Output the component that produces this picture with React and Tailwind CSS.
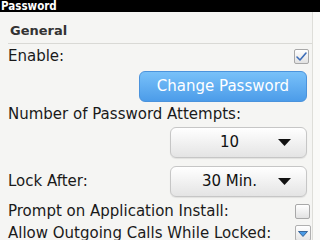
import React from "react";

const font = { fontFamily: '"DejaVu Sans", "Liberation Sans", sans-serif' };

function Dropdown({ label }) {
  return (
    <div className="w-[137px] h-[31px] rounded-[6px] border border-[#c6c6c6] bg-gradient-to-b from-[#ffffff] to-[#e4e4e4] shadow-[0_1px_1px_rgba(0,0,0,0.08)] flex items-center">
      <div className="flex-1 text-center pl-[10px] text-[15px] leading-[15px] text-[#111]">{label}</div>
      <svg width="13" height="7" viewBox="0 0 13 7" className="mr-[15px]">
        <polygon points="0,0 13,0 6.5,7" fill="#111" />
      </svg>
    </div>
  );
}

function Checkbox({ checked }) {
  return (
    <div className="w-[15px] h-[15px] rounded-[2px] border border-[#a8a8a8] bg-gradient-to-b from-[#ffffff] to-[#e2e2e2] flex items-center justify-center">
      {checked && (
        <svg width="13" height="13" viewBox="0 0 13 13">
          <path d="M2 7 L5 10 L11 3" stroke="#3d6db8" strokeWidth="1.6" fill="none" strokeLinecap="round" strokeLinejoin="round" />
        </svg>
      )}
    </div>
  );
}

export default function App() {
  return (
    <div className="w-[320px] h-[240px] overflow-hidden flex flex-col bg-[#f5f5f3]" style={font}>
      <div className="h-[12px] bg-black text-white font-bold text-[11.5px] leading-[12px] pl-[1px]" style={{ fontFamily: '"DejaVu Sans Condensed", "DejaVu Sans", sans-serif' }}>
        Password
      </div>
      <div className="h-px bg-[#2a2a2a]" />
      <div className="flex-1 flex">
        <div className="flex-1 flex flex-col border-r border-[#deded9]">
          <div className="h-[31px] pt-[11px] pl-[10px] text-[13px] leading-[15px] font-bold text-[#333]">General</div>
          <div className="h-px bg-[#d9d9d5] ml-[8px]" />
          <div className="h-[25px] flex items-center justify-between pl-[8px] pr-[3px]">
            <span className="text-[15px] leading-[15px] text-[#1a1a1a]">Enable:</span>
            <Checkbox checked />
          </div>
          <div className="mt-[2px] h-[31px] flex justify-end pr-[5px]">
            <div className="w-[168px] h-[31px] rounded-[6px] border border-[#4b93dc] bg-gradient-to-b from-[#78c1f9] to-[#4c9ce9] flex items-center justify-center text-white text-[15px] leading-[15px]">
              Change Password
            </div>
          </div>
          <div className="h-[25px] flex items-center pl-[8px]">
            <span className="text-[15px] leading-[15px] text-[#1a1a1a]">Number of Password Attempts:</span>
          </div>
          <div className="h-[31px] flex justify-end pr-[5px]">
            <Dropdown label="10" />
          </div>
          <div className="mt-[8px] h-[30px] flex items-center justify-between pl-[8px] pr-[5px]">
            <span className="text-[15px] leading-[15px] text-[#1a1a1a]">Lock After:</span>
            <Dropdown label="30 Min." />
          </div>
          <div className="h-[30px] flex items-center justify-between pl-[8px] pr-[2px]">
            <span className="text-[15px] leading-[15px] text-[#1a1a1a]">Prompt on Application Install:</span>
            <Checkbox />
          </div>
          <div className="h-[15px] flex items-start justify-between pl-[8px] pr-[1px]">
            <span className="text-[15px] leading-[15px] text-[#1a1a1a]">Allow Outgoing Calls While Locked:</span>
            <div className="w-[16px] h-[16px] -mt-px rounded-[2px] border border-[#b0b0b0] bg-gradient-to-b from-[#ffffff] to-[#e6e6e6] flex justify-center pt-[5px]">
              <svg width="10" height="6" viewBox="0 0 10 6">
                <polygon points="0.5,0.5 9.5,0.5 5,5.5" fill="#4a9be6" stroke="#1f4f86" strokeWidth="0.8" />
              </svg>
            </div>
          </div>
        </div>
        <div className="w-[7px] bg-[#fafaf8]" />
      </div>
    </div>
  );
}
